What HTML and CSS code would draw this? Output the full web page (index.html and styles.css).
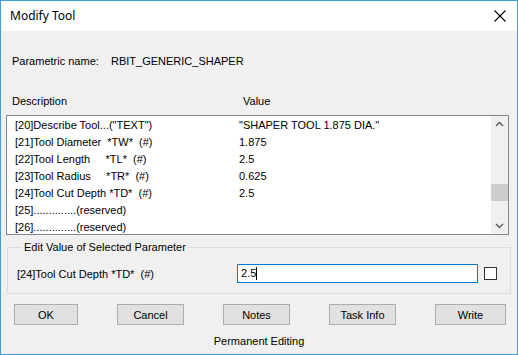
FILE: index.html
```html
<!DOCTYPE html>
<html>
<head>
<meta charset="utf-8">
<link rel="stylesheet" href="styles.css">
</head>
<body>
<div class="window">
  <div class="titlebar">
    <span class="title">Modify Tool</span>
    <svg class="close" width="12" height="12" viewBox="0 0 12 12"><path d="M0.5 0.5 L11.5 11.5 M11.5 0.5 L0.5 11.5" stroke="#000" stroke-width="1.1" fill="none"/></svg>
  </div>
  <div class="content">
    <div class="param"><span class="plabel">Parametric name:</span><span>RBIT_GENERIC_SHAPER</span></div>
    <div class="header"><span class="hdesc">Description</span><span>Value</span></div>
    <div class="list">
      <div class="rows">
        <div class="row"><span class="desc">[20]Describe Tool...("TEXT")</span><span>"SHAPER TOOL 1.875 DIA."</span></div>
        <div class="row"><span class="desc">[21]Tool Diameter&nbsp; *TW*&nbsp; (#)</span><span>1.875</span></div>
        <div class="row"><span class="desc">[22]Tool Length&nbsp;&nbsp;&nbsp;&nbsp; *TL*&nbsp; (#)</span><span>2.5</span></div>
        <div class="row"><span class="desc">[23]Tool Radius&nbsp;&nbsp;&nbsp;&nbsp; *TR*&nbsp; (#)</span><span>0.625</span></div>
        <div class="row"><span class="desc">[24]Tool Cut Depth *TD*&nbsp; (#)</span><span>2.5</span></div>
        <div class="row"><span class="desc">[25]..............(reserved)</span><span></span></div>
        <div class="row"><span class="desc">[26]..............(reserved)</span><span></span></div>
      </div>
      <div class="scrollbar">
        <svg class="arrow" width="17" height="17" viewBox="0 0 17 17"><polyline points="5,10 8.5,6.5 12,10" stroke="#606060" stroke-width="1.5" fill="none"/></svg>
        <div class="track"><div class="thumb"></div></div>
        <svg class="arrow" width="17" height="17" viewBox="0 0 17 17"><polyline points="5,7 8.5,10.5 12,7" stroke="#606060" stroke-width="1.5" fill="none"/></svg>
      </div>
    </div>
    <fieldset class="group">
      <legend>Edit Value of Selected Parameter</legend>
      <div class="editrow">
        <span class="elabel">[24]Tool Cut Depth *TD*&nbsp; (#)</span>
        <div class="input">2.5<span class="caret"></span></div>
        <div class="check"></div>
      </div>
    </fieldset>
    <div class="buttons">
      <div class="btn b-ok">OK</div>
      <div class="btn b-cancel">Cancel</div>
      <div class="btn b-notes">Notes</div>
      <div class="btn b-task">Task Info</div>
      <div class="btn b-write">Write</div>
    </div>
    <div class="footer">Permanent Editing</div>
  </div>
</div>
</body>
</html>
```

FILE: styles.css
```css
* { box-sizing: border-box; }
html, body { margin: 0; padding: 0; }
body {
  font-family: "Liberation Sans", Arial, sans-serif;
  font-size: 11px;
  color: #000;
  background: #fff;
}
.window {
  width: 518px;
  height: 355px;
  border: 1px solid #3f9edb;
  background: #f0f0f0;
  display: flex;
  flex-direction: column;
}
.titlebar {
  height: 30px;
  background: #fff;
  display: flex;
  align-items: center;
  justify-content: space-between;
  padding: 0 11px 0 9px;
}
.title {
  font-family: "Noto Sans", "Open Sans", sans-serif;
  font-size: 12px;
  color: #000;
  margin-top: -1px;
}
.close { margin-top: -1px; }
.content {
  flex: 1;
  display: flex;
  flex-direction: column;
}
.param {
  margin-top: 23px;
  padding-left: 11px;
  line-height: 14px;
  display: flex;
}
.plabel { width: 99px; }
.header {
  margin-top: 26px;
  padding-left: 11px;
  line-height: 14px;
  display: flex;
}
.hdesc { width: 231px; }
.list {
  margin: 7px 0 0 5px;
  width: 503px;
  height: 120px;
  border: 1px solid #828790;
  background: #fff;
  display: flex;
  overflow: hidden;
}
.rows {
  flex: 1;
  padding: 1px 0 0 8px;
}
.row {
  height: 17px;
  line-height: 17px;
  display: flex;
  white-space: nowrap;
}
.desc { width: 224px; }
.scrollbar {
  width: 17px;
  background: #f0f0f0;
  display: flex;
  flex-direction: column;
}
.arrow { display: block; flex: none; }
.track {
  flex: 1;
  display: flex;
  flex-direction: column;
  padding-top: 51px;
}
.thumb {
  height: 17px;
  background: #cdcdcd;
}
.group {
  margin: 5px 0 0 6px;
  width: 504px;
  border: 1px solid #dcdcdc;
  padding: 10px 0 10px 9px;
  min-width: 0;
}
.group legend {
  padding: 0 2px;
  margin-left: 5px;
  line-height: 14px;
}
.editrow {
  display: flex;
  align-items: center;
  height: 19px;
}
.elabel { width: 220px; }
.input {
  width: 241px;
  height: 19px;
  border: 1px solid #0078d7;
  background: #fff;
  padding-left: 3px;
  line-height: 17px;
  display: flex;
  align-items: center;
}
.caret {
  width: 1px;
  height: 13px;
  background: #000;
  margin-left: 0px;
}
.check {
  width: 13px;
  height: 13px;
  border: 1px solid #333;
  background: #fff;
  margin-left: 6px;
}
.buttons {
  margin-top: 10px;
  padding-left: 13px;
  display: flex;
}
.btn {
  height: 21px;
  background: #e1e1e1;
  border: 1px solid #adadad;
  display: flex;
  align-items: center;
  justify-content: center;
}
.b-ok { width: 64px; }
.b-cancel { width: 67px; margin-left: 39px; }
.b-notes { width: 67px; margin-left: 39px; }
.b-task { width: 67px; margin-left: 39px; }
.b-write { width: 71px; margin-left: 39px; }
.footer {
  margin-top: 9px;
  text-align: center;
  line-height: 14px;
}
```
